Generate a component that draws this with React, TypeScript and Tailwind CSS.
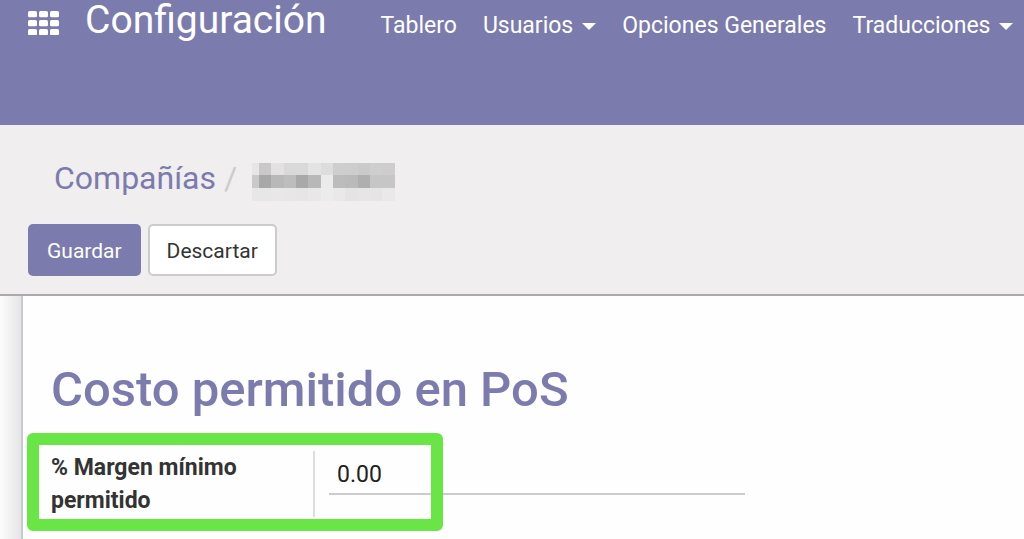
import { useState } from "react";

interface MenuItem {
  label: string;
  dropdown?: boolean;
}

const MENU: MenuItem[] = [
  { label: "Tablero" },
  { label: "Usuarios", dropdown: true },
  { label: "Opciones Generales" },
  { label: "Traducciones", dropdown: true },
];

// column edges and row shades of the pixelated company name
const TILE_X = [0, 7, 19, 32, 44, 56, 69, 81, 93, 106, 118, 130, 143];
const TILE_Y = [0, 12, 25, 38];
const TILES = [
  ["#e6e6e6", "#c9c9c9", "#e3e1e2", "#d9d9d9", "#d9d9d9", "#e3e3e3", "#dddddd", "#cecece", "#cdcdcd", "#cacaca", "#cecece", "#cdcdcd"],
  ["#c9c9c9", "#a8a8a8", "#b8b8b8", "#bdbdbd", "#a9a9a9", "#b8b8b8", "#ebebeb", "#bcbcbc", "#bababa", "#afafaf", "#c6c6c6", "#c6c6c6"],
  ["#e7e7e7", "#e7e7e7", "#e9e8e8", "#e8e6e6", "#e7e5e5", "#e8e8e8", "#ececec", "#e9e9e9", "#e5e3e3", "#e7e5e5", "#e6e4e4", "#eae9e9"],
];

function AppsIcon() {
  return (
    <svg width="31" height="24" viewBox="0 0 31 24" fill="white" aria-hidden="true">
      {[0, 9, 18].map((y) =>
        [0, 11, 22].map((x) => <rect key={x + "-" + y} x={x} y={y} width="9" height="6.3" rx="1.6" />)
      )}
    </svg>
  );
}

function Caret() {
  return (
    <svg width="14" height="7" viewBox="0 0 14 7" fill="white" aria-hidden="true">
      <path d="M0 0h14L7 7z" />
    </svg>
  );
}

function HiddenName() {
  return (
    <svg width="143" height="38" viewBox="0 0 143 38" shapeRendering="crispEdges" aria-hidden="true">
      {TILES.map((row, r) =>
        row.map((fill, c) => (
          <rect
            key={r + "-" + c}
            x={TILE_X[c]}
            y={TILE_Y[r]}
            width={TILE_X[c + 1] - TILE_X[c]}
            height={TILE_Y[r + 1] - TILE_Y[r]}
            fill={fill}
          />
        ))
      )}
    </svg>
  );
}

export default function App() {
  const [margin, setMargin] = useState("0.00");

  return (
    <div className="flex min-h-screen flex-col bg-white font-['Roboto',sans-serif] text-[#333333]">
      <header className="flex h-[125px] items-start bg-[#7c7bad] pl-7 text-white">
        <button type="button" aria-label="Aplicaciones" className="mt-[11px]">
          <AppsIcon />
        </button>
        <div className="flex items-baseline whitespace-nowrap pl-[26px]">
          <a href="#" className="text-[39px] leading-[41px]">
            Configuración
          </a>
          <nav className="ml-[54px] flex gap-[26px] text-[23px] leading-7">
            {MENU.map((item) => (
              <a key={item.label} href="#" className="flex items-center gap-[9px]">
                {item.label}
                {item.dropdown && <Caret />}
              </a>
            ))}
          </nav>
        </div>
      </header>

      <section className="border-b-2 border-[#acabac] bg-[#f0eeee] px-7 pt-[33px] pb-[18px]">
        <nav className="flex h-10 items-center pl-[26px] text-[32px] leading-10">
          <a href="#" className="text-[#7c7bad]">
            Compañías
          </a>
          <span className="ml-2 text-[#cccccc]">/</span>
          <span className="ml-[15px] pt-2">
            <HiddenName />
          </span>
        </nav>
        <div className="mt-[26px] flex gap-[7px] text-[21px]">
          <button type="button" className="h-[52px] rounded-[5px] bg-[#7c7bad] px-[19px] pt-[3px] text-white">
            Guardar
          </button>
          <button type="button" className="h-[52px] rounded-[5px] border-2 border-[#cccccc] bg-white px-[17px] pt-[3px]">
            Descartar
          </button>
        </div>
      </section>

      <main className="flex flex-1 bg-linear-to-r from-[#fcfcfc] to-[#e6e6e6] to-[21px] pl-[21px]">
        <div className="flex-1 border-l-2 border-[#c8c8d3] bg-[#fefefe] pt-[65px] pl-7">
          <h1 className="text-[49px] leading-[58px] font-medium text-[#7c7bad]">Costo permitido en PoS</h1>
          <div className="relative mt-8 flex items-start">
            <div className="flex w-[264px] border-r-2 border-[#dddddd] text-[23px] leading-[33px] font-bold">
              <label htmlFor="margin" className="w-[220px]">
                % Margen mínimo permitido
              </label>
            </div>
            <input
              id="margin"
              value={margin}
              onChange={(e) => setMargin(e.target.value)}
              className="ml-[14px] h-11 w-[416px] border-b-2 border-[#cccccc] bg-transparent px-2 pt-1 text-[23px] text-[#222222] outline-none"
            />
            <div className="pointer-events-none absolute -top-[18px] -left-6 h-[98px] w-[416px] rounded-md border-12 border-[#69e545]" />
          </div>
        </div>
      </main>
    </div>
  );
}
